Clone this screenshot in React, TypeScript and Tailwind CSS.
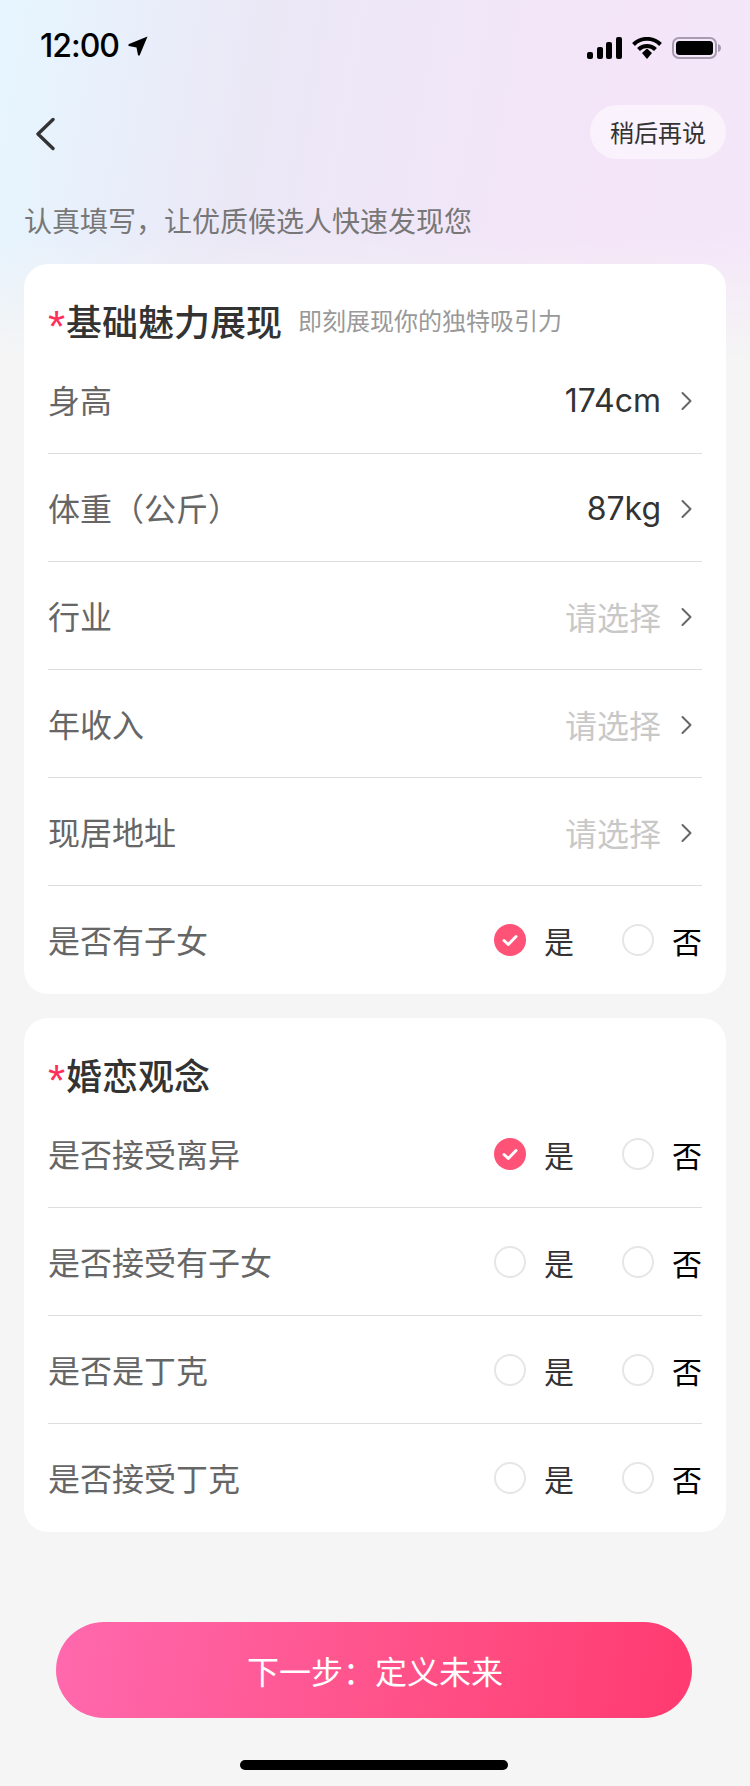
const FONT = '"Noto Sans CJK SC", sans-serif';

function Chevron() {
  return (
    <svg width="14" height="20" viewBox="0 0 14 20" fill="none" className="ml-[19px] mr-[8px] mt-[2px]">
      <path d="M2.5 2 L10.5 10 L2.5 18" stroke="#666" strokeWidth="2" strokeLinecap="round" strokeLinejoin="round" />
    </svg>
  );
}

function Radio({ checked, label, color }: { checked: boolean; label: string; color: string }) {
  return (
    <div className="flex items-center gap-[18px]">
      {checked ? (
        <svg width="32" height="32" viewBox="0 0 32 32">
          <circle cx="16" cy="16" r="16" fill="#ff5277" />
          <path d="M10 16.5 L14.3 20.5 L22 12.5" stroke="#fff" strokeWidth="3" fill="none" strokeLinecap="round" strokeLinejoin="round" />
        </svg>
      ) : (
        <div className="w-[32px] h-[32px] rounded-full border-2 border-[#e6e6e6]" />
      )}
      <span className={`text-[30px] leading-[40px] ${color}`}>{label}</span>
    </div>
  );
}

function YesNo({ yes }: { yes?: boolean }) {
  return (
    <div className="flex items-center gap-[48px]">
      <Radio checked={!!yes} label="是" color="text-[#333]" />
      <Radio checked={false} label="否" color="text-black" />
    </div>
  );
}

function Row({ label, last, children }: { label: string; last?: boolean; children: React.ReactNode }) {
  return (
    <div className={`flex items-center justify-between mx-[24px] h-[108px] ${last ? "" : "border-b border-[#dedede]"}`}>
      <span className="text-[32px] text-[#666] leading-[44px] pb-[2px]">{label}</span>
      {children}
    </div>
  );
}

function Pick({ value }: { value?: string }) {
  return (
    <div className="flex items-center">
      {value ? (
        <span className="text-[32px] text-[#333] font-['Inter'] leading-[44px] mt-[2px]">{value}</span>
      ) : (
        <span className="text-[32px] text-[#c8c8c8] leading-[44px]">请选择</span>
      )}
      <Chevron />
    </div>
  );
}

function Heading({ title, sub }: { title: string; sub?: string }) {
  return (
    <div className="flex items-center px-[24px] pt-[34px] pb-[4px] h-[82px]">
      <span className="w-[18px] h-[44px] text-[44px] leading-[58px] text-[#ff2f5b] font-['Liberation_Sans']">*</span>
      <span className="text-[36px] leading-[44px] font-medium text-[#333]">{title}</span>
      {sub && <span className="ml-[16px] text-[24px] leading-[34px] text-[#999]">{sub}</span>}
    </div>
  );
}

export default function App() {
  return (
    <div
      className="relative w-[750px] h-[1786px] overflow-hidden bg-[linear-gradient(to_bottom,transparent_235px,#f5f5f5_360px),linear-gradient(100deg,#e6f6ff_0%,#ebe8f6_25%,#f4e5f8_60%,#f5e8fb_90%,#f5eefc_100%)]"
      style={{ fontFamily: FONT }}
    >
      {/* status bar */}
      <div className="flex items-center justify-between h-[92px] pl-[40px] pr-[29px]">
        <div className="flex items-center gap-[8px]">
          <span className="text-[32px] leading-[40px] font-medium text-black font-['Inter'] tracking-[-1px]">12:00</span>
          <svg width="22" height="22" viewBox="0 0 22 22">
            <path d="M20.5 1.5 L12.8 20 Q12 21.5 11 20 L9.5 12.5 L1.8 11 Q0.5 10 2 9 Z" fill="#000" />
          </svg>
        </div>
        <div className="flex items-center gap-[10px] mt-[4px]">
          <svg width="35" height="22" viewBox="0 0 35 22">
            <rect x="0" y="15" width="6" height="7" rx="2" fill="#000" />
            <rect x="10" y="10" width="6" height="12" rx="2" fill="#000" />
            <rect x="19" y="5" width="6" height="17" rx="2" fill="#000" />
            <rect x="29" y="0" width="6" height="22" rx="2" fill="#000" />
          </svg>
          <svg width="30" height="22" viewBox="0 0 30 22" fill="none">
            <path d="M1.5 7.5 A19 19 0 0 1 28.5 7.5" stroke="#000" strokeWidth="4" />
            <path d="M6.5 12.5 A12 12 0 0 1 23.5 12.5" stroke="#000" strokeWidth="4" />
            <path d="M10 16 L15 11.5 L20 16 L15 22 Z" fill="#000" />
          </svg>
          <svg width="49" height="22" viewBox="0 0 49 22">
            <rect x="1" y="1" width="43" height="20" rx="6" fill="none" stroke="#a99bb0" strokeWidth="2" />
            <rect x="4" y="4" width="37" height="14" rx="3.5" fill="#000" />
            <path d="M46 7 Q49 8 49 11 Q49 14 46 15 Z" fill="#a99bb0" />
          </svg>
        </div>
      </div>

      {/* nav */}
      <div className="flex items-center justify-between h-[54px] mt-[13px] pl-[35px] pr-[24px]">
        <svg width="20" height="34" viewBox="0 0 20 34" fill="none" className="mt-[4px]">
          <path d="M18 2.5 L3 17 L18 31.5" stroke="#333" strokeWidth="3.4" strokeLinecap="round" strokeLinejoin="round" />
        </svg>
        <div className="flex items-center justify-center w-[136px] h-[54px] rounded-full bg-white/50">
          <span className="text-[24px] leading-[32px] text-[#333]">稍后再说</span>
        </div>
      </div>

      <p className="mt-[42px] pl-[24px] text-[28px] leading-[38px] text-[#777]">认真填写，让优质候选人快速发现您</p>

      <div className="mt-[25px] mx-[24px] flex flex-col gap-[24px]">
        <section className="bg-white rounded-[24px]">
          <Heading title="基础魅力展现" sub="即刻展现你的独特吸引力" />
          <Row label="身高"><Pick value="174cm" /></Row>
          <Row label="体重（公斤）"><Pick value="87kg" /></Row>
          <Row label="行业"><Pick /></Row>
          <Row label="年收入"><Pick /></Row>
          <Row label="现居地址"><Pick /></Row>
          <Row label="是否有子女" last><YesNo yes /></Row>
        </section>

        <section className="bg-white rounded-[24px]">
          <Heading title="婚恋观念" />
          <Row label="是否接受离异"><YesNo yes /></Row>
          <Row label="是否接受有子女"><YesNo /></Row>
          <Row label="是否是丁克"><YesNo /></Row>
          <Row label="是否接受丁克" last><YesNo /></Row>
        </section>
      </div>

      <div className="mt-[90px] ml-[56px] w-[636px] h-[96px] pl-[2px] rounded-full flex items-center justify-center bg-[linear-gradient(100deg,#ff69ae_0%,#ff4f85_60%,#ff3a70_100%)]">
        <span className="text-[32px] leading-[44px] text-white">下一步：定义未来</span>
      </div>

      <div className="mt-[42px] ml-[240px] w-[268px] h-[10px] rounded-full bg-black" />
    </div>
  );
}
